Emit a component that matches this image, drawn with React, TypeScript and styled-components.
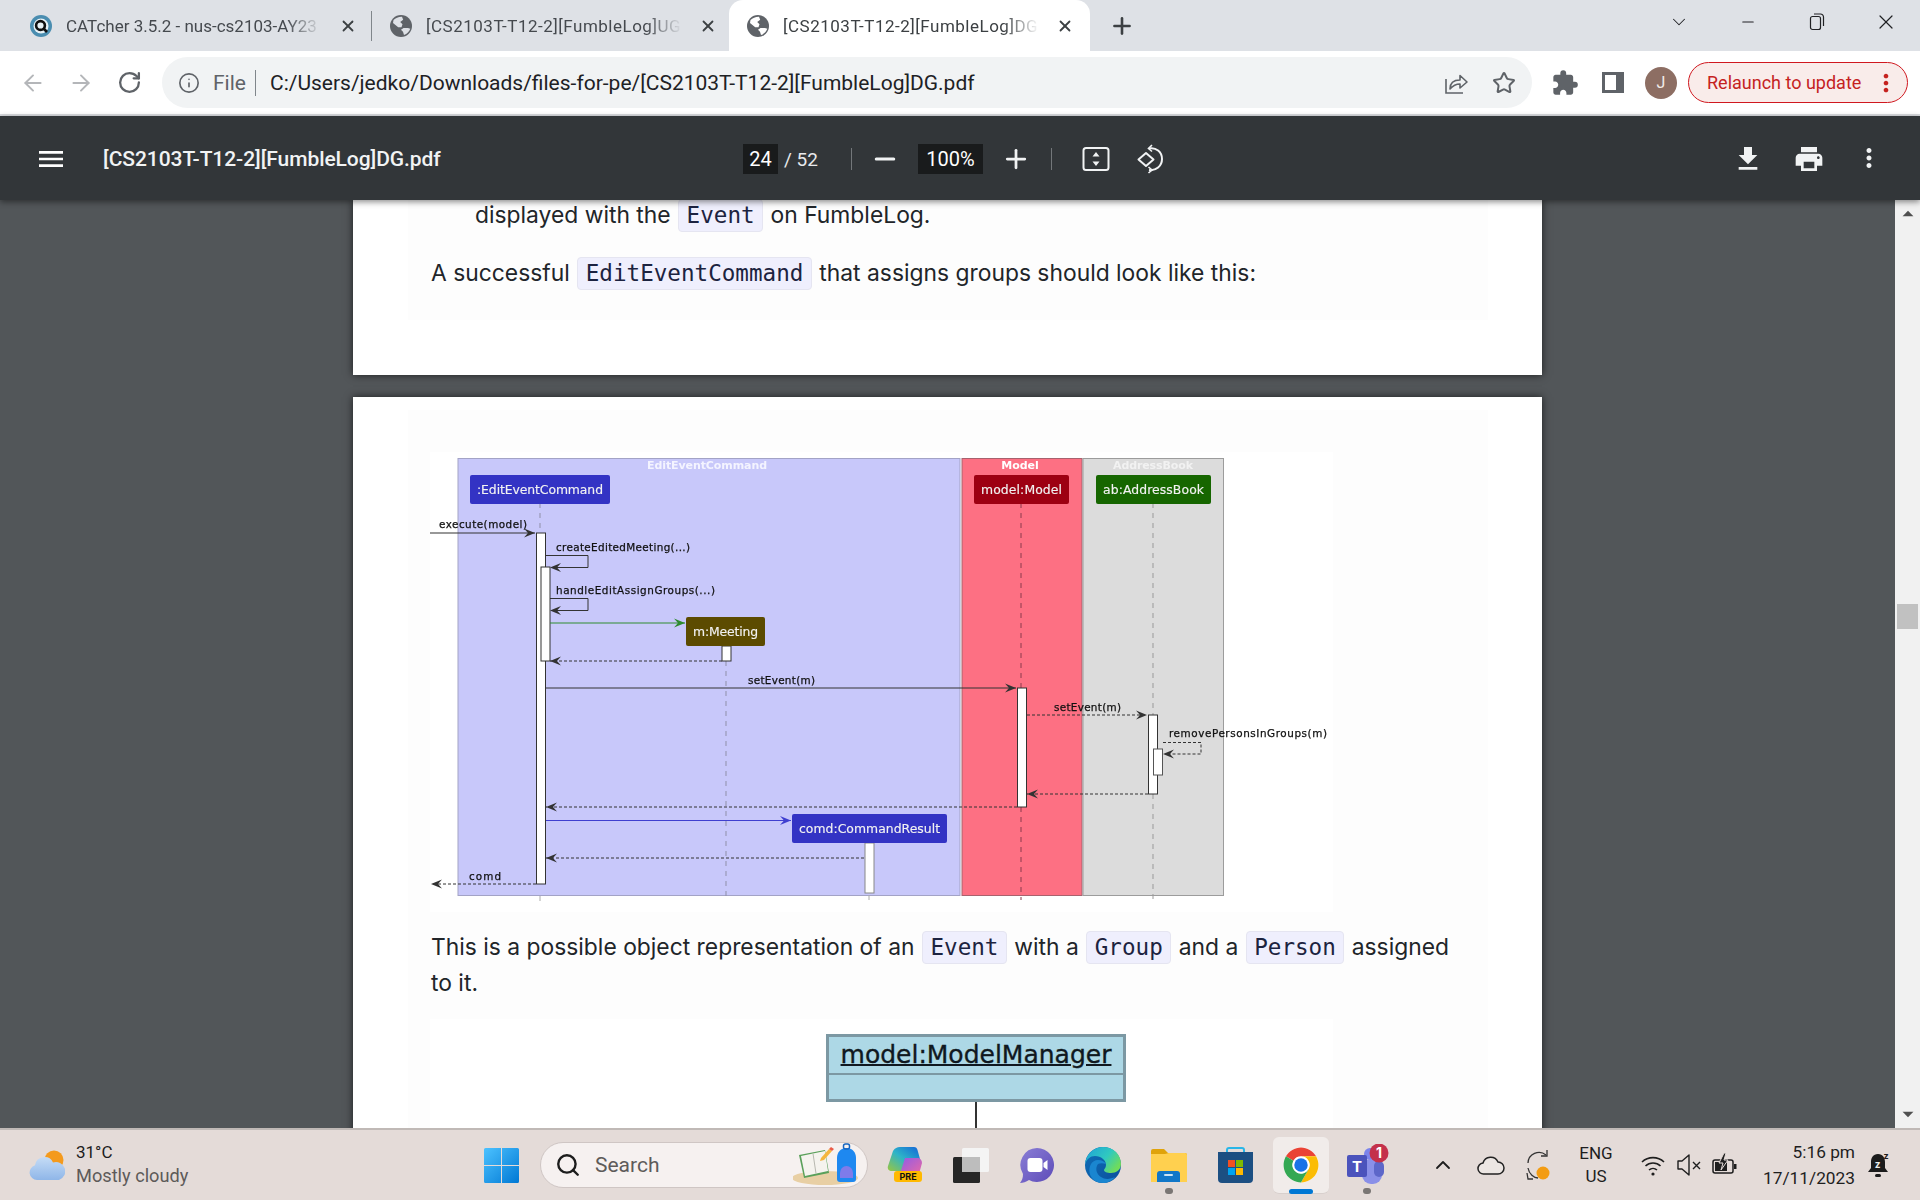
import React from 'react'
import styled, { createGlobalStyle } from 'styled-components'
import { ArrowLeft, ArrowRight, RotateCw, Info, Star, Minus, Plus, X, ChevronDown, Search, ChevronUp } from 'lucide-react'
import { MdMenu, MdFileDownload, MdPrint, MdMoreVert, MdExtension, MdArrowDropUp, MdArrowDropDown } from 'react-icons/md'

const UI_FONT = `Roboto, "Noto Sans", sans-serif`

const GlobalStyle = createGlobalStyle`
  html, body { margin: 0; padding: 0; overflow: hidden; }
  body { font-family: ${UI_FONT}; }
`

const Frame = styled.div`
  width: 1920px;
  height: 1200px;
  display: flex;
  flex-direction: column;
  overflow: hidden;
`

/* ---- tab strip ---- */
const TabStrip = styled.div`
  height: 51px;
  flex: none;
  background: #dee1e6;
  display: flex;
  padding-left: 12px;
  position: relative;
`
const Tab = styled.div<{ $width: number; $active?: boolean; $divider?: boolean }>`
  width: ${p => p.$width}px;
  display: flex;
  align-items: center;
  padding: 0 0 0 18px;
  box-sizing: border-box;
  position: relative;
  color: ${p => (p.$active ? '#3c4043' : '#45494e')};
  background: ${p => (p.$active ? '#fff' : 'transparent')};
  border-radius: ${p => (p.$active ? '14px 14px 0 0' : '0')};
  ${p =>
    p.$divider &&
    `&::after { content: ''; position: absolute; right: 0; top: 11px; bottom: 10px; width: 1px; background: #80868b; }`}
`
const TabIcon = styled.span`
  width: 22px;
  height: 22px;
  flex: none;
  display: flex;
  align-items: center;
  justify-content: center;
  color: #5f6368;
`
const TabTitle = styled.span<{ $track: number }>`
  width: 256px;
  margin-left: 14px;
  flex: none;
  font-size: 17px;
  letter-spacing: ${p => p.$track}px;
  white-space: nowrap;
  -webkit-mask-image: linear-gradient(to right, #000 86%, transparent 100%);
  mask-image: linear-gradient(to right, #000 86%, transparent 100%);
`
const TabClose = styled.span`
  width: 24px;
  height: 24px;
  margin-left: 14px;
  flex: none;
  display: flex;
  align-items: center;
  justify-content: center;
  color: #3c4043;
`
const NewTab = styled.span`
  width: 36px;
  height: 36px;
  margin: 8px 0 0 14px;
  display: flex;
  align-items: center;
  justify-content: center;
  color: #3c4043;
`
const WindowControls = styled.div`
  margin-left: auto;
  display: flex;
  height: 44px;
  color: #202124;
`
const WindowButton = styled.span`
  width: 68.75px;
  display: flex;
  align-items: center;
  justify-content: center;
`

/* ---- address bar ---- */
const Toolbar = styled.div`
  height: 65px;
  flex: none;
  background: #fff;
  border-bottom: 2px solid #dadce0;
  box-sizing: border-box;
  display: flex;
  align-items: center;
  padding: 0 12px 0 9px;
`
const NavButton = styled.span<{ $muted?: boolean }>`
  width: 48px;
  flex: none;
  display: flex;
  justify-content: center;
  color: ${p => (p.$muted ? '#b4b6b9' : '#5f6368')};
`
const Omnibox = styled.div`
  width: 1370px;
  height: 51px;
  margin-left: 9px;
  flex: none;
  background: #f1f3f4;
  border-radius: 26px;
  display: flex;
  align-items: center;
  padding: 0 16px;
  box-sizing: border-box;
  color: #5f6368;
`
const FileLabel = styled.span`
  margin-left: 13px;
  font-size: 21px;
  color: #5f6368;
`
const OmniDivider = styled.span`
  width: 1px;
  height: 26px;
  margin: 0 14px 0 9px;
  background: #80868b;
`
const Url = styled.span`
  font-size: 21px;
  color: #202124;
  white-space: nowrap;
`
const OmniActions = styled.div`
  margin-left: auto;
  display: flex;
  align-items: center;
  gap: 23px;
`
const ToolIcon = styled.span<{ $ml: number }>`
  margin-left: ${p => p.$ml}px;
  flex: none;
  display: flex;
  color: #5f6368;
`
const Avatar = styled.span`
  width: 32px;
  height: 32px;
  margin-left: 21px;
  flex: none;
  border-radius: 50%;
  background: #8d6e63;
  color: #f2ece9;
  display: flex;
  align-items: center;
  justify-content: center;
  font-size: 16px;
`
const RelaunchPill = styled.div`
  width: 220px;
  height: 41px;
  margin-left: 11px;
  flex: none;
  box-sizing: border-box;
  border: 1.5px solid #d0181f;
  border-radius: 21px;
  background: #f9ecea;
  color: #c5221f;
  display: flex;
  align-items: center;
  font-size: 18px;
  padding-left: 18px;
`
const PillDots = styled.span`
  margin-left: auto;
  margin-right: 7px;
  display: flex;
`

/* ---- pdf viewer toolbar ---- */
const PdfBar = styled.div`
  height: 84px;
  flex: none;
  background: #323639;
  color: #fff;
  display: flex;
  align-items: center;
  position: relative;
  z-index: 2;
  box-shadow: 0 2px 6px rgba(0, 0, 0, 0.45);
  padding: 2px 36px 0 0;
  box-sizing: border-box;
`
const PdfLeft = styled.div`
  width: 743px;
  flex: none;
  display: flex;
  align-items: center;
  padding-left: 35px;
  box-sizing: border-box;
`
const PdfTitle = styled.span`
  margin-left: 36px;
  font-size: 21px;
  font-weight: 500;
  letter-spacing: -0.07px;
  color: #f1f3f4;
`
const NumberBox = styled.span<{ $width: number; $ml?: number }>`
  width: ${p => p.$width}px;
  height: 30px;
  margin-left: ${p => p.$ml ?? 0}px;
  flex: none;
  background: #191b1c;
  display: flex;
  align-items: center;
  justify-content: center;
  font-size: 20px;
`
const PageTotal = styled.span`
  width: 35px;
  margin-left: 6px;
  flex: none;
  font-size: 19px;
  color: #e8eaed;
  white-space: nowrap;
`
const PdfDivider = styled.span<{ $ml: number }>`
  width: 1px;
  height: 22px;
  margin-left: ${p => p.$ml}px;
  flex: none;
  background: #73777a;
`
const PdfIcon = styled.span<{ $ml: number }>`
  margin-left: ${p => p.$ml}px;
  flex: none;
  display: flex;
  color: #f1f3f4;
`
const PdfRight = styled.div`
  margin-left: auto;
  display: flex;
  gap: 29px;
  color: #f1f3f4;
`

/* ---- document area ---- */
const Viewer = styled.div`
  flex: 1;
  min-height: 0;
  display: flex;
  background: #525659;
  overflow: hidden;
`
const PageColumn = styled.div`
  flex: 1;
  display: flex;
  flex-direction: column;
  align-items: center;
  gap: 22px;
  overflow: hidden;
`
const Page = styled.div<{ $height?: number }>`
  width: 1189px;
  flex: none;
  ${p => p.$height && `height: ${p.$height}px;`}
  background: #fff;
  box-shadow: 0 0 8px rgba(0, 0, 0, 0.65);
  padding: 0 54px 0 55px;
  box-sizing: border-box;
`
const Sheet = styled.div<{ $top?: number; $height?: number }>`
  background: #fdfdfd;
  margin-top: ${p => p.$top ?? 0}px;
  ${p => p.$height && `height: ${p.$height}px;`}
  padding: 1px 23px 0;
  font-family: Inter, sans-serif;
  font-size: 22.85px;
  color: #212529;
`
const Para = styled.p<{ $indent?: number; $lh?: number; $mt?: number }>`
  margin: ${p => p.$mt ?? 0}px 0 0;
  padding-left: ${p => p.$indent ?? 0}px;
  line-height: ${p => p.$lh ?? 36}px;
  max-width: 1040px;
`
const Code = styled.code`
  display: inline-block;
  font-family: 'DejaVu Sans Mono', monospace;
  font-size: 22.6px;
  line-height: 27px;
  color: #1c2340;
  background: #efeffd;
  border: 1px solid #e5e5f1;
  border-radius: 4px;
  padding: 2px 7.5px;
  margin: 0 1px;
`
const DiagramFrame = styled.div`
  width: 903px;
  margin-top: 41px;
  margin-left: -1px;
  background: #fff;
  filter: blur(0.25px);
  svg { display: block; }
`
const ObjectFrame = styled.div`
  width: 903px;
  height: 130px;
  margin-top: 18px;
  margin-left: -1px;
  padding: 15px 0 0 396px;
  box-sizing: border-box;
  background: #fff;
`
const ObjectBox = styled.div`
  width: 300px;
  height: 68px;
  box-sizing: border-box;
  border: 3px solid #7c98a3;
  background: #add8e6;
  position: relative;
`
const ObjectName = styled.div`
  height: 36px;
  border-bottom: 2px solid #7c98a3;
  font-family: 'DejaVu Sans', sans-serif;
  font-size: 25px;
  line-height: 35px;
  text-align: center;
  text-decoration: underline;
  text-decoration-thickness: 2px;
  -webkit-text-stroke: 0.35px #101820;
  color: #101820;
  white-space: nowrap;
`
const ObjectLink = styled.div`
  position: absolute;
  top: 65px;
  left: 146px;
  width: 2px;
  height: 40px;
  background: #333;
`
const Scrollbar = styled.div`
  width: 25px;
  flex: none;
  background: #f1f1f1;
  display: flex;
  flex-direction: column;
  align-items: center;
  justify-content: space-between;
  padding: 1px 0;
  box-sizing: border-box;
  color: #505050;
  position: relative;
`
const ScrollThumb = styled.div`
  position: absolute;
  top: 404px;
  left: 2px;
  width: 21px;
  height: 25px;
  background: #c1c1c1;
`

/* ---- taskbar ---- */
const Taskbar = styled.div`
  height: 72px;
  flex: none;
  background: #e4dbd8;
  border-top: 2px solid #c0b9b6;
  box-sizing: border-box;
  display: flex;
  align-items: center;
  padding-left: 29px;
  position: relative;
  z-index: 3;
`
const Weather = styled.div`
  width: 455px;
  flex: none;
  display: flex;
  align-items: center;
  gap: 11px;
`
const WeatherText = styled.div`
  font-size: 17px;
  line-height: 24px;
  color: #1c1c1c;
  margin-top: -2px;
  span { display: block; color: #5d5a59; font-size: 18.2px; }
`
const SearchBox = styled.div`
  width: 328px;
  height: 46px;
  margin-left: 21px;
  flex: none;
  box-sizing: border-box;
  border-radius: 23px;
  background: #f6f1f0;
  border: 1.5px solid #cfc6c4;
  display: flex;
  align-items: center;
  padding-left: 14px;
  color: #1d1d1d;
  position: relative;
`
const SearchLabel = styled.span`
  margin-left: 14px;
  font-size: 21px;
  color: #5e5b5a;
`
const SearchArt = styled.span`
  position: absolute;
  right: 6px;
  top: 0;
  display: flex;
`
const Slots = styled.div`
  display: flex;
  margin-left: 4px;
  flex: none;
`
const Slot = styled.div<{ $active?: boolean; $running?: boolean }>`
  width: 66px;
  height: 57px;
  display: flex;
  align-items: center;
  justify-content: center;
  position: relative;
  &::before {
    content: '';
    display: ${p => (p.$active ? 'block' : 'none')};
    position: absolute;
    left: 5px;
    right: 5px;
    top: 0;
    bottom: 0;
    border-radius: 6px;
    background: #f1ecea;
    border-bottom: 1px solid #d8d0cd;
  }
  &::after {
    content: '';
    display: ${p => (p.$active || p.$running ? 'block' : 'none')};
    position: absolute;
    bottom: 0;
    left: 50%;
    transform: translateX(-50%);
    width: ${p => (p.$active ? 24 : 8)}px;
    height: ${p => (p.$active ? 5 : 6)}px;
    border-radius: 3px;
    background: ${p => (p.$active ? '#0078d4' : '#7a7674')};
  }
  svg { position: relative; }
`
const Tray = styled.div`
  display: flex;
  align-items: center;
  margin-left: 19px;
  color: #1e1e1e;
`
const TrayIcon = styled.span<{ $width: number }>`
  width: ${p => p.$width}px;
  flex: none;
  display: flex;
  justify-content: center;
`
const Lang = styled.div`
  width: 66px;
  flex: none;
  text-align: center;
  font-size: 17px;
  line-height: 23px;
  margin-right: 6px;
`
const Clock = styled.div`
  width: 112px;
  flex: none;
  text-align: right;
  font-size: 17.3px;
  line-height: 26px;
`

/* ---- sequence diagram helpers ---- */
type Msg = { x1: number; x2: number; y: number; color?: string; dashed?: boolean; head?: boolean }

const Head = ({ x, y, dir, color }: { x: number; y: number; dir: number; color: string }) => (
  <polygon
    points={`${x},${y} ${x - dir * 11},${y - 4.5} ${x - dir * 7},${y} ${x - dir * 11},${y + 4.5}`}
    fill={color}
  />
)

const Message = ({ x1, x2, y, color = '#333', dashed, head = true }: Msg) => (
  <g>
    <line x1={x1} x2={x2} y1={y} y2={y} stroke={color} strokeWidth={dashed ? 1 : 1.1} strokeDasharray={dashed ? '3 2' : undefined} />
    {head && <Head x={x2} y={y} dir={x2 > x1 ? 1 : -1} color={color} />}
  </g>
)

const Activation = ({ x, y, w = 9, h, stroke = '#333' }: { x: number; y: number; w?: number; h: number; stroke?: string }) => (
  <rect x={x} y={y} width={w} height={h} fill="#fff" stroke={stroke} strokeWidth="1" />
)

const Participant = ({ x, y, w, fill, label }: { x: number; y: number; w: number; fill: string; label: string }) => (
  <g>
    <rect x={x} y={y} width={w} height={29} rx="2" fill={fill} />
    <text x={x + w / 2} y={y + 19} fontSize="12.4" fill="#f2f2f2" stroke="#f2f2f2" strokeWidth="0.15" textAnchor="middle" textLength={w - 14}>
      {label}
    </text>
  </g>
)

const Label = ({ x, y, w, children }: { x: number; y: number; w: number; children: string }) => (
  <text x={x} y={y + 0.7} fontSize="10.4" fill="#111" stroke="#111" strokeWidth="0.25" textLength={w}>
    {children}
  </text>
)

const Lifeline = ({ x, y1, y2, color }: { x: number; y1: number; y2: number; color: string }) => (
  <line x1={x} x2={x} y1={y1} y2={y2} stroke={color} strokeWidth="1" strokeDasharray="5 5" />
)

const SequenceDiagram = () => (
  <svg width="903" height="460" viewBox="430 452 903 460" fontFamily="'DejaVu Sans', sans-serif">
    <rect x="458" y="458.5" width="502" height="437" fill="#c8c8fa" stroke="#a3a3c6" strokeWidth="1" />
    <rect x="962" y="458.5" width="120" height="437" fill="#fd7083" stroke="#a8626e" strokeWidth="1" />
    <rect x="1083" y="458.5" width="140.5" height="437" fill="#dcdcdc" stroke="#9c9c9c" strokeWidth="1" />
    <text x="707" y="469" fontSize="11" fontWeight="700" fill="#f4f4ff" textAnchor="middle" textLength="120">EditEventCommand</text>
    <text x="1020" y="469" fontSize="11" fontWeight="700" fill="#fff" textAnchor="middle">Model</text>
    <text x="1153" y="469" fontSize="11" fontWeight="700" fill="#f2f2f2" textAnchor="middle" textLength="80">AddressBook</text>

    <Lifeline x={540} y1={503} y2={533} color="#8f8fa8" />
    <Lifeline x={540} y1={896} y2={902} color="#aaa" />
    <Lifeline x={726} y1={661} y2={900} color="#8f8fa8" />
    <Lifeline x={869} y1={895} y2={900} color="#aaa" />
    <Lifeline x={1021} y1={503} y2={688} color="#8a3a4c" />
    <Lifeline x={1021} y1={807} y2={900} color="#8a3a4c" />
    <Lifeline x={1153} y1={503} y2={715} color="#999" />
    <Lifeline x={1153} y1={794} y2={900} color="#999" />

    <Participant x={470} y={475} w={140} fill="#3333c4" label=":EditEventCommand" />
    <Participant x={974} y={475} w={95} fill="#9d0012" label="model:Model" />
    <Participant x={1096} y={475} w={115} fill="#166600" label="ab:AddressBook" />

    <Activation x={536.5} y={533} h={351} />
    <Activation x={541} y={567} h={94} />
    <Activation x={1017.5} y={688} h={119} />
    <Activation x={1148.5} y={715} h={79} />
    <Activation x={1153.5} y={749} h={26} stroke="#555" />
    <Activation x={722} y={646} h={15} />
    <Activation x={865} y={843} h={50} stroke="#888" />

    <Label x={439} y={527} w={88}>execute(model)</Label>
    <Message x1={430} x2={535} y={533} />

    <Label x={556} y={550} w={134}>createEditedMeeting(...)</Label>
    <polyline points="546,555.5 588,555.5 588,567.5 552,567.5" fill="none" stroke="#333" />
    <Head x={550} y={567.5} dir={-1} color="#333" />

    <Label x={556} y={593} w={159}>handleEditAssignGroups(...)</Label>
    <polyline points="550,598.5 588,598.5 588,610.5 552,610.5" fill="none" stroke="#333" />
    <Head x={550} y={610.5} dir={-1} color="#333" />

    <Message x1={550} x2={685} y={623} color="#2e8b2e" />
    <Participant x={686} y={617} w={79} fill="#5c4b00" label="m:Meeting" />
    <Message x1={722} x2={550} y={661} dashed />

    <Label x={748} y={683} w={67}>setEvent(m)</Label>
    <Message x1={546} x2={1016} y={688} />

    <Label x={1054} y={710} w={67}>setEvent(m)</Label>
    <Message x1={1027} x2={1147} y={715} dashed />

    <Label x={1169} y={736} w={158}>removePersonsInGroups(m)</Label>
    <polyline points="1163,742.5 1201,742.5 1201,754 1165,754" fill="none" stroke="#333" strokeDasharray="3 2" />
    <Head x={1163} y={754} dir={-1} color="#333" />

    <Message x1={1148} x2={1027} y={794} dashed />
    <Message x1={1017} x2={546} y={807} dashed />

    <Message x1={546} x2={791} y={820.5} color="#3f3fd0" />
    <Participant x={792} y={814} w={155} fill="#3333c4" label="comd:CommandResult" />
    <Message x1={864} x2={546} y={858} dashed />

    <Label x={469} y={879} w={32}>comd</Label>
    <Message x1={536} x2={431} y={884} dashed />
  </svg>
)

/* ---- small drawn icons ---- */
const CatcherIcon = () => (
  <svg width="22" height="22" viewBox="0 0 22 22">
    <circle cx="11" cy="11" r="11" fill="#4a8db0" />
    <circle cx="11" cy="11" r="7.5" fill="#e8f2f6" />
    <circle cx="10.5" cy="10.5" r="4.4" fill="none" stroke="#111" strokeWidth="2.6" />
    <line x1="13.5" y1="13.5" x2="17" y2="17" stroke="#111" strokeWidth="2.6" />
  </svg>
)
const GlobeIcon = ({ land }: { land: string }) => (
  <svg width="22" height="22" viewBox="0 0 22 22">
    <circle cx="11" cy="11" r="11" fill="#5f6368" />
    <path d="M3.500 5C5.500 3 8.500 1.700 12 1.800l1.200 3-3 2.200 2.300 2.300-1 3H8.200L3 8z" fill={land} />
    <path d="M13.500 13h4.500l2.300.8c-1 3-3.300 5.200-6.300 6.200l-1-3.200-2-2z" fill={land} />
  </svg>
)
const RestoreIcon = () => (
  <svg width="18" height="20" viewBox="0 0 18 20" fill="none" stroke="#202124" strokeWidth="1.2">
    <rect x="2.5" y="4.5" width="10" height="13" rx="2" />
    <path d="M6 2h6.500a3 3 0 0 1 3 3v9" />
  </svg>
)
const ShareIcon = () => (
  <svg width="26" height="26" viewBox="0 0 26 26" fill="none" stroke="#5f6368" strokeWidth="1.6">
    <path d="M3 9v14h17" />
    <path d="M7 19c0-6 4-9 10-9V5.500l7 6.500-7 6v-4c-4 0-7 1.500-10 5z" strokeLinejoin="round" />
  </svg>
)
const SidePanelIcon = () => (
  <svg width="22" height="21" viewBox="0 0 22 21">
    <rect x="1.500" y="1.500" width="19" height="18" fill="none" stroke="#5f6368" strokeWidth="3" />
    <rect x="14" y="1" width="7" height="19" fill="#5f6368" />
  </svg>
)
const FitIcon = () => (
  <svg width="28" height="28" viewBox="0 0 28 28" fill="none">
    <rect x="1.500" y="3" width="25" height="22" rx="2.500" stroke="#f1f3f4" strokeWidth="2" />
    <path d="M14 7l3.500 4.500h-7zM14 21l-3.500-4.500h7z" fill="#f1f3f4" />
  </svg>
)
const RotateIcon = () => (
  <svg width="28" height="30" viewBox="0 0 28 30" fill="none" stroke="#f1f3f4" strokeWidth="2">
    <path d="M10 9l7.500 6.500L10 22 2.500 15.500z" strokeLinejoin="round" />
    <path d="M13 4.500c7-1.500 13 3.500 13 10.500s-6 12-13 11" />
    <path d="M16 1l-3.500 3.500 3.500 3M12.500 23l3.500 3-3.500 3" strokeWidth="1.600" />
  </svg>
)
const WeatherIcon = () => (
  <svg width="36" height="32" viewBox="0 0 36 32">
    <defs>
      <linearGradient id="wxCloud" x1="0" y1="0" x2="0" y2="1">
        <stop offset="0" stopColor="#c5dcf6" />
        <stop offset="1" stopColor="#8fb6e8" />
      </linearGradient>
    </defs>
    <circle cx="25" cy="11" r="9.500" fill="#f49a1d" />
    <path d="M8 31a7.500 7.500 0 0 1-2-14.700A9.500 9.500 0 0 1 24 13.500a8.800 8.800 0 0 1 6 17.500z" fill="url(#wxCloud)" />
  </svg>
)
const WindowsIcon = () => (
  <svg width="35" height="35" viewBox="0 0 35 35">
    <defs>
      <linearGradient id="winTile" x1="0" y1="0" x2="1" y2="1">
        <stop offset="0" stopColor="#4cc2ff" />
        <stop offset="1" stopColor="#0078d4" />
      </linearGradient>
    </defs>
    <path d="M0 1.500A1.500 1.500 0 0 1 1.500 0H17v17H0zM18 0h15.500A1.500 1.500 0 0 1 35 1.500V17H18zM0 18h17v17H1.500A1.500 1.500 0 0 1 0 33.500zM18 18h17v15.500a1.500 1.500 0 0 1-1.500 1.500H18z" fill="url(#winTile)" />
  </svg>
)
const SearchArtwork = () => (
  <svg width="68" height="44" viewBox="0 0 68 44">
    <ellipse cx="32" cy="35" rx="33" ry="7" fill="#e8cfa4" />
    <path d="M6 12l26-5 4 23-25 5z" fill="#5aa05a" />
    <path d="M8 13l24-5 3 20-23 5z" fill="#f5f3ee" />
    <path d="M20 10.500l3 20" stroke="#b8b8b0" strokeWidth="1" />
    <path d="M28 15l8-9 3 2-8 9-4 1z" fill="#f4b63f" />
    <path d="M36 6l2-2 3 2-2 2z" fill="#ea5a47" />
    <path d="M44 15c0-6 4-10 9.500-10s9.500 4 9.500 10v21c0 2-1 3-3 3H47c-2 0-3-1-3-3z" fill="#1e88f0" />
    <path d="M47 30a6.500 7 0 0 1 13 0v5H47z" fill="#7f7bea" />
    <rect x="50.500" y="1" width="6" height="5" rx="2" fill="none" stroke="#1565c0" strokeWidth="1.500" />
  </svg>
)
const CopilotIcon = () => (
  <svg width="36" height="36" viewBox="0 0 36 36">
    <defs>
      <linearGradient id="cpA" x1="0" y1="1" x2="1" y2="0">
        <stop offset="0" stopColor="#9bc63f" />
        <stop offset="0.5" stopColor="#2db4c8" />
        <stop offset="1" stopColor="#1464d8" />
      </linearGradient>
      <linearGradient id="cpB" x1="0" y1="0" x2="1" y2="1">
        <stop offset="0" stopColor="#8e5be8" />
        <stop offset="1" stopColor="#f06aa0" />
      </linearGradient>
    </defs>
    <path d="M6 4C8 1 10 0 13 0h14c2 0 3 1 3.500 3L33 12H20L15 24H5c-3 0-5-2-4-5z" fill="url(#cpA)" />
    <path d="M18 11h13c2 0 4 2 4 5l-3 11c-1 2-3 3-5 3H12z" fill="url(#cpB)" />
    <rect x="7" y="24" width="28" height="11" rx="3" fill="#ffb900" />
    <text x="21" y="33" fontSize="9" fontWeight="700" fontFamily="Inter, sans-serif" textAnchor="middle" fill="#111">PRE</text>
  </svg>
)
const TaskViewIcon = () => (
  <svg width="36" height="35" viewBox="0 0 36 35">
    <rect x="0" y="9" width="27" height="26" rx="1.500" fill="#262626" />
    <rect x="9" y="0" width="27" height="24" rx="1.500" fill="#f4f4f4" />
    <rect x="9" y="9" width="18" height="15" fill="#bdbdbd" />
  </svg>
)
const MeetIcon = () => (
  <svg width="34" height="35" viewBox="0 0 34 35">
    <defs>
      <linearGradient id="meetBg" x1="0" y1="0" x2="1" y2="1">
        <stop offset="0" stopColor="#8a7ed6" />
        <stop offset="1" stopColor="#5d4bb8" />
      </linearGradient>
    </defs>
    <path d="M17 0a17 17 0 1 1-8 32c-3 2-6 3-9 3 2-3 3-5 3-9A17 17 0 0 1 17 0z" fill="url(#meetBg)" />
    <rect x="7.500" y="10" width="15" height="14" rx="3" fill="#fff" />
    <path d="M23.500 15l4-3v10l-4-3z" fill="#fff" />
  </svg>
)
const EdgeIcon = () => (
  <svg width="36" height="36" viewBox="0 0 36 36">
    <defs>
      <linearGradient id="edgeTop" x1="0" y1="0" x2="1" y2="0.6">
        <stop offset="0" stopColor="#1f9fd8" />
        <stop offset="0.6" stopColor="#2fc9c0" />
        <stop offset="1" stopColor="#6fdc5c" />
      </linearGradient>
      <linearGradient id="edgeLow" x1="0" y1="0" x2="1" y2="1">
        <stop offset="0" stopColor="#0f6fb8" />
        <stop offset="1" stopColor="#0a4f9c" />
      </linearGradient>
    </defs>
    <circle cx="18" cy="18" r="18" fill="url(#edgeLow)" />
    <path d="M18 0c10 0 18 7 18 17 0 6-5 9-10 9-4 0-7-1-7-3 0-1 2-2 2-5 0-5-5-9-11-9C5 9 2 12 0 17 1 7 9 0 18 0z" fill="url(#edgeTop)" />
    <path d="M13 17c-3 4-2 10 3 13 4 3 10 2 14 0-3 4-8 6-12 6-3 0-6-1-8-2-6-4-7-12-4-17 1-2 4-4 7-4 4 0 7 2 8 4-3-1-6-1-8 0z" fill="#1a86d0" />
  </svg>
)
const FolderIcon = () => (
  <svg width="36" height="33" viewBox="0 0 36 33">
    <path d="M0 2a2 2 0 0 1 2-2h11l4 4h17a2 2 0 0 1 2 2v3H0z" fill="#e0a30b" />
    <path d="M0 5h14l4-1h16a2 2 0 0 1 2 2v27H0z" fill="#ffd04f" />
    <path d="M6 33V25a3 3 0 0 1 3-3h17a3 3 0 0 1 3 3v8z" fill="#1177c8" />
    <rect x="13" y="25" width="9" height="2" rx="1" fill="#c9e3f5" />
  </svg>
)
const StoreIcon = () => (
  <svg width="35" height="36" viewBox="0 0 35 36">
    <path d="M9 6V3a2 2 0 0 1 2-2h13a2 2 0 0 1 2 2v3" fill="none" stroke="#29b6e8" strokeWidth="2" />
    <path d="M0 5h35v27a4 4 0 0 1-4 4H4a4 4 0 0 1-4-4z" fill="#1c4f82" />
    <rect x="10" y="13" width="7" height="7" fill="#f25022" />
    <rect x="18" y="13" width="7" height="7" fill="#7fba00" />
    <rect x="10" y="21" width="7" height="7" fill="#00a4ef" />
    <rect x="18" y="21" width="7" height="7" fill="#ffb900" />
  </svg>
)
const ChromeIcon = () => (
  <svg width="38" height="38" viewBox="0 0 48 48">
    <circle cx="24" cy="24" r="22" fill="#fff" />
    <path d="M4.950 13A22 22 0 0 1 43.050 13H24A11 11 0 0 0 14.470 18.500Z" fill="#ea4335" />
    <path d="M43.050 13A22 22 0 0 1 24 46L33.530 29.500A11 11 0 0 0 24 13Z" fill="#fbbc04" />
    <path d="M24 46A22 22 0 0 1 4.950 13L14.470 18.500A11 11 0 0 0 33.530 29.500Z" fill="#34a853" />
    <circle cx="24" cy="24" r="10.500" fill="#fff" />
    <circle cx="24" cy="24" r="8.500" fill="#1a73e8" />
  </svg>
)
const TeamsIcon = () => (
  <svg width="46" height="42" viewBox="0 0 46 42">
    <circle cx="26" cy="10" r="6" fill="#7b83eb" />
    <rect x="18" y="15" width="20" height="25" rx="9" fill="#8a90e8" />
    <rect x="30" y="17" width="10" height="16" rx="5" fill="#5d67c9" />
    <rect x="3" y="11" width="20" height="22" rx="2" fill="#4b53bc" />
    <text x="13" y="28" fontSize="15" fontWeight="700" fontFamily="Inter, sans-serif" textAnchor="middle" fill="#fff">T</text>
    <circle cx="35" cy="9" r="9.500" fill="#c4314b" />
    <text x="35" y="14" fontSize="14" fontWeight="700" fontFamily="Inter, sans-serif" textAnchor="middle" fill="#fff">1</text>
  </svg>
)
const CloudIcon = () => (
  <svg width="28" height="24" viewBox="0 0 28 24">
    <path d="M7 21a5.500 5.500 0 0 1-1-11A8 8 0 0 1 21 9a6 6 0 0 1 0 12z" fill="#ece6e3" stroke="#222" strokeWidth="1.500" />
  </svg>
)
const SyncIcon = () => (
  <svg width="30" height="34" viewBox="0 0 30 34" fill="none" stroke="#333" strokeWidth="1.300">
    <path d="M4 15A11 11 0 0 1 22 7" />
    <path d="M23 2v6h-6" />
    <path d="M4 20c1 6 6 10 10 10" />
    <path d="M3 25l1 6h5" />
    <circle cx="19" cy="25" r="6.500" fill="#f39c12" stroke="none" />
  </svg>
)
const WifiIcon = () => (
  <svg width="26" height="26" viewBox="0 0 26 26" fill="none" stroke="#1e1e1e" strokeWidth="1.600">
    <path d="M2 10a16 16 0 0 1 22 0M5.500 14a11 11 0 0 1 15 0M9 18a6 6 0 0 1 8 0" />
    <circle cx="13" cy="22" r="1.600" fill="#1e1e1e" stroke="none" />
  </svg>
)
const MuteIcon = () => (
  <svg width="26" height="26" viewBox="0 0 26 26" fill="none" stroke="#1e1e1e" strokeWidth="1.400">
    <path d="M2 9h4l7-6v20l-7-6H2z" strokeLinejoin="round" />
    <path d="M17 10l7 7M24 10l-7 7" />
  </svg>
)
const BatteryIcon = () => (
  <svg width="26" height="26" viewBox="0 0 26 26">
    <rect x="1" y="8" width="20" height="13" rx="2" fill="none" stroke="#1e1e1e" strokeWidth="1.500" />
    <rect x="3" y="10" width="12" height="9" fill="#1e1e1e" />
    <rect x="22" y="12" width="2.500" height="5" fill="#1e1e1e" />
    <path d="M12 1L7 11h4l-2 7 7-10h-4l2-7z" fill="#1e1e1e" stroke="#e4dbd8" strokeWidth="1" />
  </svg>
)
const BellIcon = () => (
  <svg width="24" height="30" viewBox="0 0 24 30">
    <path d="M12 4c-5 0-7 4-7 8v6l-3 4h20l-3-4v-6c0-4-2-8-7-8z" fill="#1c1c1c" />
    <rect x="9" y="24" width="6" height="3" rx="1.500" fill="#1c1c1c" />
    <text x="11.500" y="18" fontSize="10" fontWeight="700" fontFamily="Inter, sans-serif" textAnchor="middle" fill="#eee">z</text>
    <text x="20" y="9" fontSize="9" fontWeight="700" fontFamily="Inter, sans-serif" textAnchor="middle" fill="#1c1c1c">z</text>
  </svg>
)

const tabs = [
  { title: 'CATcher 3.5.2 - nus-cs2103-AY23', width: 360, track: 0, icon: <CatcherIcon />, divider: true },
  { title: '[CS2103T-T12-2][FumbleLog]UG', width: 357, track: 0.5, icon: <GlobeIcon land="#dee1e6" /> },
  { title: '[CS2103T-T12-2][FumbleLog]DG', width: 361, track: 0.5, icon: <GlobeIcon land="#fff" />, active: true },
]

const dock = [
  { icon: <CopilotIcon /> },
  { icon: <TaskViewIcon /> },
  { icon: <MeetIcon /> },
  { icon: <EdgeIcon /> },
  { icon: <FolderIcon />, running: true },
  { icon: <StoreIcon /> },
  { icon: <ChromeIcon />, active: true },
  { icon: <TeamsIcon />, running: true },
]

const App: React.FC = () => (
  <Frame>
    <GlobalStyle />
    <TabStrip>
      {tabs.map(t => (
        <Tab key={t.title} $width={t.width} $active={t.active} $divider={t.divider}>
          <TabIcon>{t.icon}</TabIcon>
          <TabTitle $track={t.track}>{t.title}</TabTitle>
          <TabClose><X size={18} strokeWidth={2.4} /></TabClose>
        </Tab>
      ))}
      <NewTab><Plus size={26} strokeWidth={2.4} /></NewTab>
      <WindowControls>
        <WindowButton><ChevronDown size={22} strokeWidth={1.1} /></WindowButton>
        <WindowButton><Minus size={18} strokeWidth={1.4} /></WindowButton>
        <WindowButton><RestoreIcon /></WindowButton>
        <WindowButton><X size={24} strokeWidth={1.2} /></WindowButton>
      </WindowControls>
    </TabStrip>

    <Toolbar>
      <NavButton $muted><ArrowLeft size={26} strokeWidth={1.8} /></NavButton>
      <NavButton $muted><ArrowRight size={26} strokeWidth={1.8} /></NavButton>
      <NavButton><RotateCw size={25} strokeWidth={2.2} /></NavButton>
      <Omnibox>
        <Info size={22} strokeWidth={1.8} />
        <FileLabel>File</FileLabel>
        <OmniDivider />
        <Url>C:/Users/jedko/Downloads/files-for-pe/[CS2103T-T12-2][FumbleLog]DG.pdf</Url>
        <OmniActions>
          <ShareIcon />
          <Star size={24} strokeWidth={2} />
        </OmniActions>
      </Omnibox>
      <ToolIcon $ml={19}><MdExtension size={28} /></ToolIcon>
      <ToolIcon $ml={23}><SidePanelIcon /></ToolIcon>
      <Avatar>J</Avatar>
      <RelaunchPill>
        Relaunch to update
        <PillDots><MdMoreVert size={28} /></PillDots>
      </RelaunchPill>
    </Toolbar>

    <PdfBar>
      <PdfLeft>
        <MdMenu size={32} />
        <PdfTitle>[CS2103T-T12-2][FumbleLog]DG.pdf</PdfTitle>
      </PdfLeft>
      <NumberBox $width={35}>24</NumberBox>
      <PageTotal>/ 52</PageTotal>
      <PdfDivider $ml={32} />
      <PdfIcon $ml={18}><Minus size={30} strokeWidth={2.4} /></PdfIcon>
      <NumberBox $width={65} $ml={18}>100%</NumberBox>
      <PdfIcon $ml={18}><Plus size={30} strokeWidth={2.2} /></PdfIcon>
      <PdfDivider $ml={20} />
      <PdfIcon $ml={30}><FitIcon /></PdfIcon>
      <PdfIcon $ml={26}><RotateIcon /></PdfIcon>
      <PdfRight>
        <MdFileDownload size={32} />
        <MdPrint size={32} />
        <MdMoreVert size={30} />
      </PdfRight>
    </PdfBar>

    <Viewer>
      <PageColumn>
        <Page $height={175}>
          <Sheet $height={119}>
            <Para $indent={44} $lh={28} $mt={-2}>displayed with the <Code>Event</Code> on FumbleLog.</Para>
            <Para $lh={36} $mt={23}>A successful <Code>EditEventCommand</Code> that assigns groups should look like this:</Para>
          </Sheet>
        </Page>
        <Page>
          <Sheet $top={13}>
            <DiagramFrame><SequenceDiagram /></DiagramFrame>
            <Para $mt={17}>
              This is a possible object representation of an <Code>Event</Code> with a <Code>Group</Code> and a <Code>Person</Code> assigned to it.
            </Para>
            <ObjectFrame>
              <ObjectBox>
                <ObjectName>model:ModelManager</ObjectName>
                <ObjectLink />
              </ObjectBox>
            </ObjectFrame>
          </Sheet>
        </Page>
      </PageColumn>
      <Scrollbar>
        <MdArrowDropUp size={26} />
        <ScrollThumb />
        <MdArrowDropDown size={26} />
      </Scrollbar>
    </Viewer>

    <Taskbar>
      <Weather>
        <WeatherIcon />
        <WeatherText>31°C<span>Mostly cloudy</span></WeatherText>
      </Weather>
      <WindowsIcon />
      <SearchBox>
        <Search size={26} strokeWidth={2.2} />
        <SearchLabel>Search</SearchLabel>
        <SearchArt><SearchArtwork /></SearchArt>
      </SearchBox>
      <Slots>
        {dock.map((d, i) => (
          <Slot key={i} $active={d.active} $running={d.running}>{d.icon}</Slot>
        ))}
      </Slots>
      <Tray>
        <TrayIcon $width={48}><ChevronUp size={24} strokeWidth={1.8} /></TrayIcon>
        <TrayIcon $width={48}><CloudIcon /></TrayIcon>
        <TrayIcon $width={48}><SyncIcon /></TrayIcon>
        <Lang>ENG<br />US</Lang>
        <TrayIcon $width={36}><WifiIcon /></TrayIcon>
        <TrayIcon $width={36}><MuteIcon /></TrayIcon>
        <TrayIcon $width={36}><BatteryIcon /></TrayIcon>
        <Clock>5:16 pm<br />17/11/2023</Clock>
        <TrayIcon $width={46}><BellIcon /></TrayIcon>
      </Tray>
    </Taskbar>
  </Frame>
)

export default App
